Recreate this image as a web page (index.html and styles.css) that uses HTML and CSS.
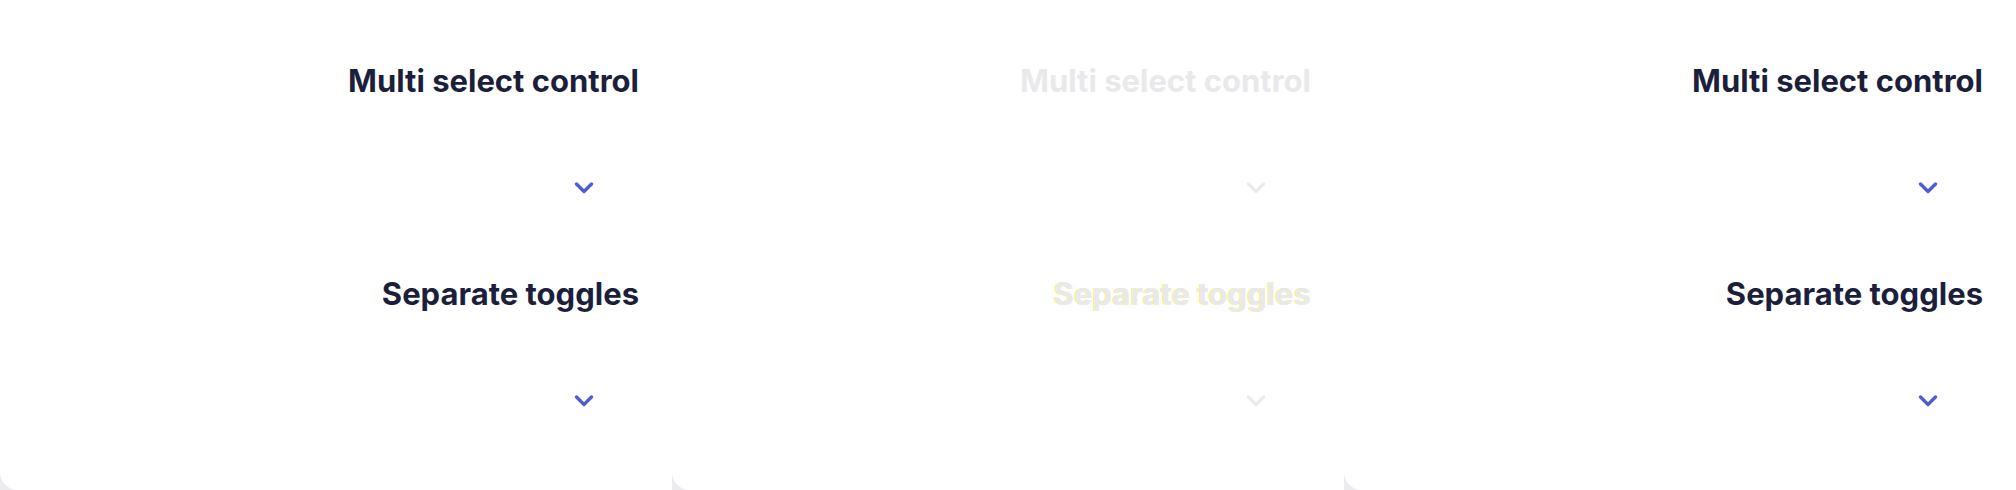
FILE: index.html
```html
<!DOCTYPE html>
<html lang="en">
<head>
<meta charset="utf-8">
<title>Controls</title>
<link rel="stylesheet" href="styles.css">
</head>
<body>
<main class="board">
  <section class="panel">
    <div class="field">
      <h2 class="label">Multi select control</h2>
      <div class="select"><svg class="chev" viewBox="0 0 20 12"><path d="M2.5 2 L10 9.5 L17.5 2"/></svg></div>
    </div>
    <div class="field">
      <h2 class="label">Separate toggles</h2>
      <div class="select"><svg class="chev" viewBox="0 0 20 12"><path d="M2.5 2 L10 9.5 L17.5 2"/></svg></div>
    </div>
  </section>
  <section class="panel panel--faded">
    <div class="field">
      <h2 class="label">Multi select control</h2>
      <div class="select"><svg class="chev" viewBox="0 0 20 12"><path d="M2.5 2 L10 9.5 L17.5 2"/></svg></div>
    </div>
    <div class="field">
      <h2 class="label label--glitch">Separate toggles</h2>
      <div class="select"><svg class="chev" viewBox="0 0 20 12"><path d="M2.5 2 L10 9.5 L17.5 2"/></svg></div>
    </div>
  </section>
  <section class="panel">
    <div class="field">
      <h2 class="label">Multi select control</h2>
      <div class="select"><svg class="chev" viewBox="0 0 20 12"><path d="M2.5 2 L10 9.5 L17.5 2"/></svg></div>
    </div>
    <div class="field">
      <h2 class="label">Separate toggles</h2>
      <div class="select"><svg class="chev" viewBox="0 0 20 12"><path d="M2.5 2 L10 9.5 L17.5 2"/></svg></div>
    </div>
  </section>
</main>
</body>
</html>
```
FILE: styles.css
```css
* { box-sizing: border-box; }
html, body {
  margin: 0;
  padding: 0;
  height: 490px;
  overflow: hidden;
  background: #ececee;
  font-family: Inter, "Noto Sans", sans-serif;
}
.board {
  display: grid;
  grid-template-columns: repeat(3, 672px);
  height: 490px;
}
.panel {
  background: #ffffff;
  border-bottom-left-radius: 18px;
  display: flex;
  flex-direction: column;
  align-items: flex-end;
  padding: 63px 33px 0 0;
}
.field {
  display: flex;
  flex-direction: column;
  align-items: flex-end;
  width: 100%;
  margin-bottom: 58px;
}
.label {
  margin: 0;
  font-size: 31px;
  line-height: 36px;
  font-weight: 700;
  color: #1c1f3b;
  letter-spacing: 0;
}
.select {
  margin-top: 59px;
  height: 60px;
  width: 100%;
  display: flex;
  align-items: center;
  justify-content: flex-end;
  padding-right: 45px;
}
.chev {
  width: 20px;
  height: 12px;
  fill: none;
  stroke: #4a5fc8;
  stroke-width: 3.3;
  stroke-linecap: round;
  stroke-linejoin: round;
}
.panel--faded .label { color: #e9e9eb; }
.panel--faded .chev { stroke: #ececee; }
.label--glitch {
  text-shadow: -1px 0 #f5f060;
}
```
